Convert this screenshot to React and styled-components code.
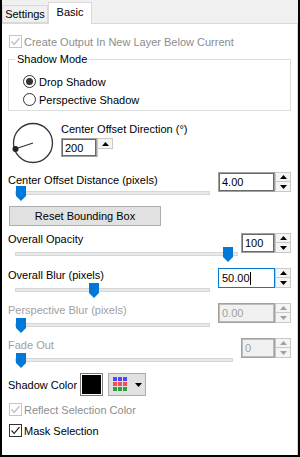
import React from 'react';
import styled, { createGlobalStyle } from 'styled-components';

const GlobalStyle = createGlobalStyle`
  html, body { margin: 0; padding: 0; background: #fff; }
  body {
    font-family: "Liberation Sans", Arial, sans-serif;
    font-size: 11px;
    color: #000;
  }
  * { box-sizing: border-box; }
`;

const Window = styled.div`
  width: 300px;
  height: 457px;
  border: 2px solid #000;
  border-top: none;
  background: #f0f0f0;
  display: flex;
  flex-direction: column;
  overflow: hidden;
`;

const TabStrip = styled.div`
  height: 23px;
  display: flex;
  align-items: flex-end;
  position: relative;
  z-index: 1;
`;

const Tab = styled.div`
  height: ${p => (p.$active ? 22 : 18)}px;
  width: ${p => p.$w}px;
  margin-bottom: ${p => (p.$active ? -1 : 0)}px;
  background: ${p => (p.$active ? '#fff' : '#f0f0f0')};
  border: 1px solid #d9d9d9;
  border-bottom: ${p => (p.$active ? 'none' : '1px solid #d9d9d9')};
  display: flex;
  align-items: center;
  justify-content: center;
  padding-bottom: ${p => (p.$active ? 3 : 0)}px;
`;

const Page = styled.div`
  flex: 1;
  width: 296px;
  background: #fff;
  border-top: 1px solid #d9d9d9;
  border-right: 1px solid #d9d9d9;
  display: flex;
  flex-direction: column;
`;

const CheckRow = styled.label`
  display: flex;
  align-items: center;
  gap: 2px;
  height: 13px;
  margin: ${p => p.$mt}px 0 0 7px;
  color: ${p => (p.$disabled ? '#8d8d8d' : '#000')};
  white-space: nowrap;
`;

const Box = styled.span`
  width: 13px;
  height: 13px;
  border: 1px solid ${p => (p.$disabled ? '#c4c4c4' : '#333')};
  background: #fff;
  display: flex;
  align-items: center;
  justify-content: center;
`;

const Group = styled.fieldset`
  margin: 5px 6px 0;
  padding: 0;
  border: 1px solid #dcdcdc;
  min-width: 0;
`;

const Legend = styled.legend`
  margin-left: 6px;
  padding: 0 2px;
  line-height: 13px;
`;

const RadioList = styled.div`
  display: flex;
  flex-direction: column;
  gap: 5px;
  padding: 9px 0 4px 14px;
`;

const RadioRow = styled.label`
  display: flex;
  align-items: center;
  gap: 3px;
  height: 13px;
`;

const RadioDot = styled.span`
  width: 13px;
  height: 13px;
  border-radius: 50%;
  border: 1px solid #333;
  display: flex;
  align-items: center;
  justify-content: center;
  &::after {
    content: '';
    width: 7px;
    height: 7px;
    border-radius: 50%;
    background: ${p => (p.$on ? '#333' : 'transparent')};
  }
`;

const DialRow = styled.div`
  display: flex;
  margin-top: 11px;
  padding-left: 10px;
`;

const DialCol = styled.div`
  display: flex;
  flex-direction: column;
  gap: 2px;
  padding-top: 1px;
  margin-left: 6px;
`;

const Label = styled.div`
  line-height: 13px;
  color: ${p => (p.$disabled ? '#a0a0a0' : '#000')};
  white-space: nowrap;
`;

const Field = styled.div`
  display: grid;
  grid-template-columns: 1fr auto;
  grid-template-rows: ${p => p.$labelH}px 16px;
  margin: ${p => p.$mt}px 6px 0;
`;

const SpinWrap = styled.div`
  grid-column: 2;
  grid-row: 1 / span 2;
  margin-top: ${p => p.$mt}px;
  display: flex;
  align-self: start;
  height: ${p => p.$h}px;
`;

const SpinInput = styled.div`
  width: ${p => p.$w}px;
  height: 100%;
  border: 1px solid ${p => (p.$focus ? '#0078d7' : '#a0a0a0')};
  box-shadow: ${p => (p.$focus ? 'none' : `inset 0 0 0 1px ${p.$disabled ? '#bdbdbd' : '#6a6a6a'}`)};
  background: ${p => (p.$disabled ? '#f0f0f0' : '#fff')};
  color: ${p => (p.$disabled ? '#a0a0a0' : '#000')};
  padding: 0 2px 0 3px;
  display: flex;
  align-items: center;
`;

const Caret = styled.span`
  width: 1px;
  height: 13px;
  background: #000;
`;

const SpinButtons = styled.div`
  width: 16px;
  display: flex;
  flex-direction: column;
`;

const SpinBtn = styled.div`
  height: ${p => p.$h || 10}px;
  border: 1px solid #c8c8c8;
  background: #f4f4f4;
  display: flex;
  align-items: center;
  justify-content: center;
  & + & { border-top: none; }
`;

const SpinBlank = styled.div`
  flex: 1;
  border-left: 1px solid #c8c8c8;
`;

const Slider = styled.div`
  grid-column: 1;
  grid-row: 2;
  position: relative;
  margin-left: 7px;
  width: ${p => p.$w}px;
  height: 16px;
`;

const Track = styled.div`
  position: absolute;
  left: 0;
  right: 0;
  top: 5px;
  height: 4px;
  background: #e7eaea;
  border: 1px solid #d6d6d6;
`;

const Thumb = styled.svg`
  position: absolute;
  top: 0;
`;

const ResetButton = styled.button`
  margin: 4px 0 0 7px;
  width: 152px;
  height: 20px;
  background: #e1e1e1;
  border: 1px solid #adadad;
  font: inherit;
  color: #000;
  padding: 0;
`;

const ColorRow = styled.div`
  display: flex;
  align-items: center;
  margin: 4px 0 0 6px;
  height: 23px;
`;

const ColorLabel = styled.span`
  width: 72px;
  white-space: nowrap;
`;

const Swatch = styled.div`
  width: 23px;
  height: 23px;
  border: 1px solid #7a7a7a;
  padding: 1px;
  background: #fff;
  &::after {
    content: '';
    display: block;
    width: 100%;
    height: 100%;
    background: #000;
  }
`;

const PaletteButton = styled.div`
  margin-left: 5px;
  width: 38px;
  height: 23px;
  border: 1px solid #adadad;
  background: #e1e1e1;
  display: flex;
  align-items: center;
  padding-left: 4px;
  gap: 7px;
`;

const Up = ({ c = '#000' }) => (
  <svg width="7" height="4" viewBox="0 0 7 4"><polygon points="0,4 7,4 3.5,0" fill={c} /></svg>
);
const Down = ({ c = '#000' }) => (
  <svg width="7" height="4" viewBox="0 0 7 4"><polygon points="0,0 7,0 3.5,4" fill={c} /></svg>
);

const Check = ({ c }) => (
  <svg width="11" height="11" viewBox="0 0 11 11">
    <polyline points="1.5,5.5 4.2,8.3 9.5,2.2" fill="none" stroke={c} strokeWidth="1.2" />
  </svg>
);

const CheckBox = ({ label, checked, disabled, mt }) => (
  <CheckRow $mt={mt} $disabled={disabled}>
    <Box $disabled={disabled}>{checked && <Check c={disabled ? '#b4b4b4' : '#222'} />}</Box>
    {label}
  </CheckRow>
);

const Spin = ({ value, w, h = 20, mt = -1, focus, disabled }) => (
  <SpinWrap $mt={mt} $h={h}>
    <SpinInput $w={w} $focus={focus} $disabled={disabled}>
      {value}
      {focus && <Caret />}
    </SpinInput>
    <SpinButtons>
      <SpinBtn $h={h / 2}><Up c={disabled ? '#a0a0a0' : '#000'} /></SpinBtn>
      <SpinBtn $h={h / 2}><Down c={disabled ? '#a0a0a0' : '#000'} /></SpinBtn>
    </SpinButtons>
  </SpinWrap>
);

const TrackBar = ({ w, pos }) => (
  <Slider $w={w}>
    <Track />
    <Thumb width="10" height="15" viewBox="0 0 10 15" style={{ left: 1 + pos * (w - 12) }}>
      <polygon points="0,0 10,0 10,10 5,15 0,10" fill="#0078d7" />
    </Thumb>
  </Slider>
);

const SliderField = ({ label, value, mt, labelH = 14, spinW, spinMt, trackW, pos, focus, disabled }) => (
  <Field $mt={mt} $labelH={labelH}>
    <Label $disabled={disabled}>{label}</Label>
    <Spin value={value} w={spinW} mt={spinMt} focus={focus} disabled={disabled} />
    <TrackBar w={trackW} pos={pos} />
  </Field>
);

const Dial = () => (
  <svg width="43" height="43" viewBox="0 0 43 43">
    <circle cx="21" cy="21" r="19.5" fill="none" stroke="#333" strokeWidth="1.3" />
    <line x1="21" y1="21" x2="3" y2="27" stroke="#333" strokeWidth="1.3" />
    <circle cx="3.5" cy="27" r="3" fill="#222" />
  </svg>
);

const PaletteIcon = () => {
  const rows = ['#4848ff', '#ff4c4c', '#2ea043'];
  return (
    <svg width="15" height="15" viewBox="0 0 15 15">
      {rows.map((c, r) => [0, 1, 2].map(k => (
        <rect key={`${r}-${k}`} x={k * 5} y={r * 5} width="4" height="4" fill={c} />
      )))}
    </svg>
  );
};

export default function App() {
  return (
    <>
      <GlobalStyle />
      <Window>
        <TabStrip>
          <Tab $w={46}>Settings</Tab>
          <Tab $w={44} $active>Basic</Tab>
        </TabStrip>
        <Page>
          <CheckBox label="Create Output In New Layer Below Current" checked disabled mt={11} />

          <Group>
            <Legend>Shadow Mode</Legend>
            <RadioList>
              <RadioRow><RadioDot $on />Drop Shadow</RadioRow>
              <RadioRow><RadioDot />Perspective Shadow</RadioRow>
            </RadioList>
          </Group>

          <DialRow>
            <Dial />
            <DialCol>
              <Label>Center Offset Direction (°)</Label>
              <SpinWrap $mt={0} $h={19}>
                <SpinInput $w={36}>200</SpinInput>
                <SpinButtons>
                  <SpinBtn $h={11}><Up /></SpinBtn>
                  <SpinBlank />
                </SpinButtons>
              </SpinWrap>
            </DialCol>
          </DialRow>

          <SliderField label="Center Offset Distance (pixels)" value="4.00" mt={9} labelH={12}
            spinW={57} spinMt={-2} trackW={195} pos={0} />

          <ResetButton>Reset Bounding Box</ResetButton>

          <SliderField label="Overall Opacity" value="100" mt={7} spinW={34} spinMt={0} trackW={223} pos={0.98} />
          <SliderField label="Overall Blur (pixels)" value="50.00" mt={6} spinW={57} trackW={195} pos={0.4} focus />
          <SliderField label="Perspective Blur (pixels)" value="0.00" mt={5} spinW={57} trackW={195} pos={0} disabled />
          <SliderField label="Fade Out" value="0" mt={5} spinW={34} trackW={218} pos={0} disabled />

          <ColorRow>
            <ColorLabel>Shadow Color</ColorLabel>
            <Swatch />
            <PaletteButton>
              <PaletteIcon />
              <Down />
            </PaletteButton>
          </ColorRow>

          <CheckBox label="Reflect Selection Color" checked disabled mt={7} />
          <CheckBox label="Mask Selection" checked mt={8} />
        </Page>
      </Window>
    </>
  );
}
